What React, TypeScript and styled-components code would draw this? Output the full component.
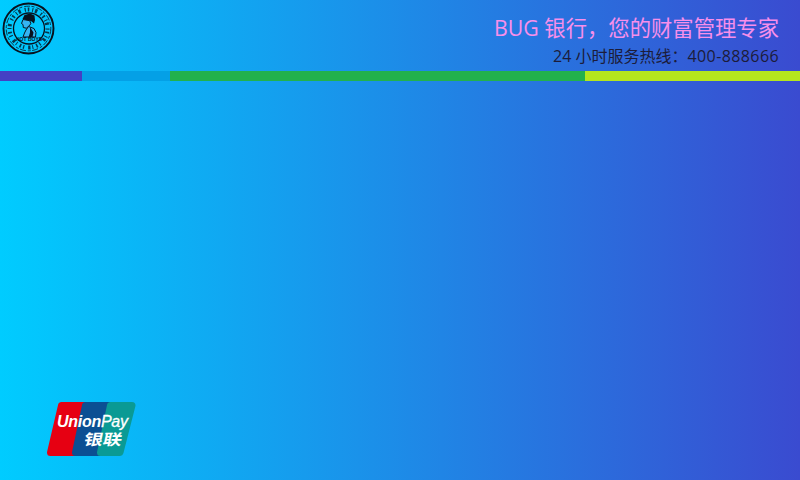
import React from "react";
import styled, { createGlobalStyle } from "styled-components";

const Global = createGlobalStyle`
  html, body { margin: 0; padding: 0; width: 800px; height: 480px; overflow: hidden; }
  #root { width: 800px; height: 480px; }
`;

const Screen = styled.div`
  width: 800px;
  height: 480px;
  display: flex;
  flex-direction: column;
  justify-content: space-between;
  background: linear-gradient(90deg, #00ccff 0%, #3a4bd0 100%);
  font-family: "Open Sans", "Noto Sans CJK SC", sans-serif;
`;

const Top = styled.header`
  display: flex;
  flex-direction: column;
`;

const Header = styled.div`
  height: 71px;
  display: flex;
  justify-content: space-between;
  padding: 0 21px 0 2px;
`;

const Logo = styled.svg`
  width: 53px;
  height: 53px;
  margin-top: 2px;
`;

const Titles = styled.div`
  display: flex;
  flex-direction: column;
  align-items: flex-end;
  padding-top: 13px;
`;

const Title = styled.div`
  font-size: 21.33px;
  line-height: 30px;
  color: #f88fea;
  white-space: nowrap;
`;

const Hotline = styled.div`
  font-size: 16px;
  line-height: 24px;
  margin-top: 1px;
  color: #1c1c3a;
  white-space: nowrap;
`;

const Digits = styled.span`
  letter-spacing: 0.4px;
`;

const Stripe = styled.div`
  height: 10px;
  display: flex;
`;

const Segment = styled.div<{ $w: number; $c: string }>`
  width: ${(p) => p.$w}px;
  background: ${(p) => p.$c};
`;

const Footer = styled.footer`
  height: 78px;
  padding-left: 47px;
`;

const UnionPay = styled.svg`
  width: 89px;
  height: 54px;
  display: block;
`;

export default function App() {
  return (
    <Screen>
      <Global />
      <Top>
        <Header>
          <Logo viewBox="0 0 53 53">
            <circle cx="26.5" cy="26.5" r="25" fill="none" stroke="#08121e" strokeWidth="1.9" />
            <circle cx="26.5" cy="26.5" r="22.3" fill="none" stroke="#08121e" strokeWidth="1" strokeDasharray="6 1.5 3 2" opacity="0.8" />
            <circle cx="26.5" cy="26.5" r="19" fill="none" stroke="#08121e" strokeWidth="4" strokeDasharray="1.2 2 1.6 3 1 1.8 2.4 4" opacity="0.8" />
            <circle cx="27" cy="26.5" r="15.5" fill="none" stroke="#08121e" strokeWidth="1.3" />
            <path d="M20.5 17l2-4 5.500-1.500 4.500 2 .5 4.500-1 3.500-3-2.500-4-.5z" fill="#08121e" />
            <path d="M21 17.500l-1.500 4 1.500 1 .3 3 3 .7 2.500-2 2-2.500-1-3-4-.7z" fill="#35b4f2" stroke="#08121e" strokeWidth="1" />
            <path d="M26.500 24.500l5.500 2 2 4-.5 4.500H21l1.500-4 1.500-3z" fill="#35b4f2" stroke="#08121e" strokeWidth="1" />
            <path d="M28 25l3.500 5.500-1 4.500-4 .5 1.500-5z" fill="#08121e" />
            <text x="27" y="38.5" textAnchor="middle" fontFamily="Liberation Sans, sans-serif" fontSize="5" fontWeight="700" fill="#08121e">NOT BOYS</text>
          </Logo>
          <Titles>
            <Title>BUG 银行{"\uFF0C"}您的财富管理专家</Title>
            <Hotline>24 小时服务热线{"\uFF1A"}<Digits>400-888666</Digits></Hotline>
          </Titles>
        </Header>
        <Stripe>
          <Segment $w={82} $c="#4440c4" />
          <Segment $w={88} $c="#04a0e6" />
          <Segment $w={415} $c="#22b14c" />
          <Segment $w={215} $c="#b5e61d" />
        </Stripe>
      </Top>
      <Footer>
        <UnionPay viewBox="0 0 89 54">
          <g strokeLinejoin="round" strokeWidth="7">
            <path d="M14.500 3.500H40L29 50.500H3.500z" fill="#e60012" stroke="#e60012" />
            <path d="M38.500 3.500H64L53 50.500H28.500z" fill="#0b4f93" stroke="#0b4f93" />
            <path d="M63.500 3.500H85L73 50.500H53.500z" fill="#0a9a94" stroke="#0a9a94" />
          </g>
          <text x="10" y="25" fontFamily="Liberation Sans, sans-serif" fontSize="16" fontStyle="italic" fontWeight="700" fill="#fff" textLength="71">
            Union<tspan fontWeight="400" stroke="#fff" strokeWidth="0.3">Pay</tspan>
          </text>
          <text transform="translate(36 43) skewX(-12) scale(1 .8)" fontFamily="Noto Sans CJK SC, sans-serif" fontSize="19" fontWeight="700" fill="#fff">银联</text>
        </UnionPay>
      </Footer>
    </Screen>
  );
}
